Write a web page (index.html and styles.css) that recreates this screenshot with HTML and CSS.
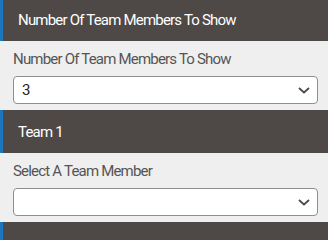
FILE: index.html
```html
<!DOCTYPE html>
<html>
<head>
<meta charset="utf-8">
<link rel="stylesheet" href="styles.css">
</head>
<body>
<div class="page">
  <section class="panel">
    <div class="panel-head">Number Of Team Members To Show</div>
    <div class="panel-body">
      <label class="field-label">Number Of Team Members To Show</label>
      <div class="select">
        <span class="select-value">3</span>
        <svg class="chev" width="12" height="7" viewBox="0 0 12 7"><path d="M1 1 L6 5.5 L11 1" fill="none" stroke="#4a4a4a" stroke-width="1.7"/></svg>
      </div>
    </div>
  </section>
  <section class="panel">
    <div class="panel-head">Team 1</div>
    <div class="panel-body">
      <label class="field-label">Select A Team Member</label>
      <div class="select">
        <span class="select-value"></span>
        <svg class="chev" width="12" height="7" viewBox="0 0 12 7"><path d="M1 1 L6 5.5 L11 1" fill="none" stroke="#4a4a4a" stroke-width="1.7"/></svg>
      </div>
    </div>
  </section>
  <section class="panel">
    <div class="panel-head"></div>
  </section>
</div>
</body>
</html>
```
FILE: styles.css
```css
html, body {
  margin: 0;
  padding: 0;
  background: #efefef;
  overflow: hidden;
}
.page {
  margin-top: -2px;
  font-family: Roboto, "Liberation Sans", sans-serif;
}
.panel-head {
  height: 43px;
  box-sizing: border-box;
  border-left: 3px solid #1b76bc;
  background: #4e4946;
  color: #ffffff;
  font-size: 15px;
  letter-spacing: -0.8px;
  padding-left: 15px;
  display: flex;
  align-items: center;
}
.panel-body {
  background: #efefef;
  padding: 9px 10px 6px 13px;
}
.field-label {
  display: block;
  color: #555555;
  font-size: 15px;
  letter-spacing: -0.8px;
  line-height: 18px;
  margin-bottom: 8px;
}
.select {
  height: 28px;
  box-sizing: border-box;
  border: 1px solid #8e8e8e;
  border-radius: 4px;
  background: #ffffff;
  display: flex;
  align-items: center;
  justify-content: space-between;
  padding: 0 7px 0 8px;
  color: #222222;
  font-size: 15px;
}
.chev {
  display: block;
}
```
